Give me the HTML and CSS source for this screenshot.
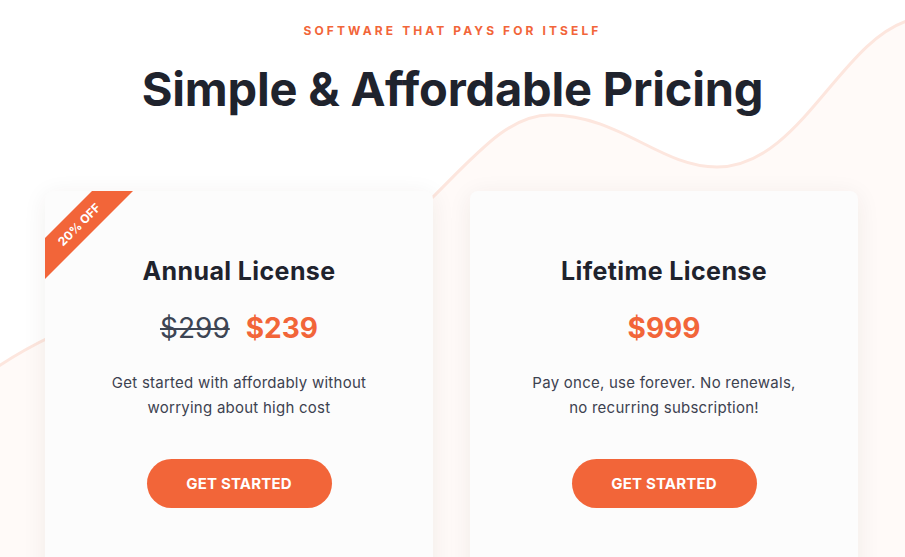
FILE: index.html
```html
<!DOCTYPE html>
<html lang="en">
<head>
<meta charset="utf-8">
<title>Pricing</title>
<link rel="stylesheet" href="styles.css">
</head>
<body>
<section class="pricing">
  <svg class="wave" width="905" height="557" viewBox="0 0 905 557" aria-hidden="true">
    <path class="wave-fill" d="M-10,372 C150,260 330,300 433,197 C480,150 510,115 550,115 C620,115 660,167 717,167 C800,167 840,40 910,20 L910,560 L-10,560 Z"/>
    <path class="wave-line" d="M-10,372 C150,260 330,300 433,197 C480,150 510,115 550,115 C620,115 660,167 717,167 C800,167 840,40 910,20"/>
  </svg>
  <header class="head">
    <p class="eyebrow">SOFTWARE THAT PAYS FOR ITSELF</p>
    <h1 class="title">Simple &amp; Affordable Pricing</h1>
  </header>
  <div class="cards">
    <article class="card">
      <div class="ribbon"><span class="ribbon-band">20% OFF</span></div>
      <h2 class="card-title">Annual License</h2>
      <div class="price"><s class="old">$299</s><span class="now">$239</span></div>
      <p class="desc">Get started with affordably without<br>worrying about high cost</p>
      <a class="btn" href="#">GET STARTED</a>
    </article>
    <article class="card">
      <h2 class="card-title">Lifetime License</h2>
      <div class="price"><span class="now">$999</span></div>
      <p class="desc">Pay once, use forever. No renewals,<br>no recurring subscription!</p>
      <a class="btn" href="#">GET STARTED</a>
    </article>
  </div>
</section>
</body>
</html>
```
FILE: styles.css
```css
* { box-sizing: border-box; }
html, body { margin: 0; padding: 0; background: #fff; }
body { font-family: Inter, "Noto Sans", sans-serif; color: #1f232d; overflow: hidden; }

.pricing { position: relative; width: 905px; height: 557px; overflow: hidden; }
.wave { position: absolute; left: 0; top: 0; z-index: 0; }
.wave-fill { fill: #fffaf8; }
.wave-line { fill: none; stroke: #fde6de; stroke-width: 3; }

.head { position: relative; z-index: 1; text-align: center; padding-top: 22px; }
.eyebrow {
  margin: 0; font-size: 12px; line-height: 18px; font-weight: 700;
  letter-spacing: 3.1px; color: #f26539;
}
.title {
  margin: 20px 0 0; font-size: 47px; line-height: 58px; font-weight: 700;
  color: #1f232d; letter-spacing: -0.2px;
}

.cards {
  position: relative; z-index: 1;
  display: flex; justify-content: center; gap: 37px;
  margin-top: 73px; padding-right: 2px;
}
.card {
  position: relative; width: 388px; height: 420px;
  background: #fcfcfc; border-radius: 8px;
  box-shadow: 0 4px 24px rgba(60, 40, 30, 0.07);
  text-align: center; padding-top: 64px; overflow: hidden;
}
.ribbon { position: absolute; left: 0; top: 0; width: 120px; height: 120px; overflow: hidden; }
.ribbon-band {
  position: absolute; left: -36px; top: 19px; width: 140px; height: 29px;
  background: #f26539; color: #fff; font-size: 12px; font-weight: 700;
  line-height: 29px; text-align: center; transform: rotate(-45deg);
}
.card-title { margin: 0; font-size: 25px; line-height: 32px; font-weight: 700; color: #1f232d; letter-spacing: 0.4px; }
.price { margin-top: 23px; font-size: 28px; line-height: 36px; font-weight: 700; display: flex; justify-content: center; gap: 16px; }
.old { color: #3d4554; font-weight: 400; text-decoration-thickness: 2px; }
.now { color: #f26539; }
.desc { margin: 24px 0 0; font-size: 15px; line-height: 25px; color: #3d4250; letter-spacing: 0.25px; }
.btn {
  display: inline-block; margin-top: 39px; width: 185px; height: 49px; border-radius: 25px;
  background: #f26539; color: #fff; font-size: 15px; font-weight: 700; line-height: 49px;
  text-decoration: none; letter-spacing: 0.2px;
}
```
